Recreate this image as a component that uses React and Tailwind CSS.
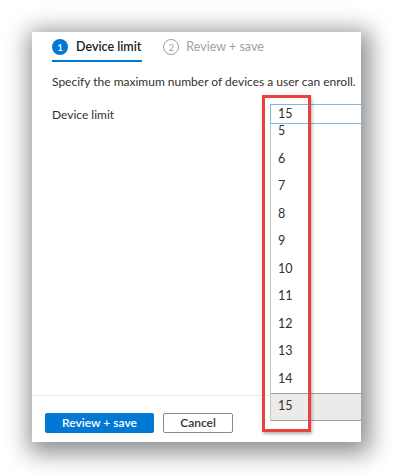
export default function App() {
  const items = [5, 6, 7, 8, 9, 10, 11, 12, 13, 14, 15];
  return (
    <div
      className="relative w-[393px] h-[474px] bg-white pl-[32px] pt-[32px] overflow-hidden text-[#323130]"
      style={{ fontFamily: 'Lato, "Open Sans", sans-serif' }}
    >
      <div className="relative w-[329px] h-[410px] bg-white overflow-hidden flex flex-col shadow-[3px_5px_22px_6px_rgba(0,0,0,0.45)]">
        <div className="flex items-end px-[20px] pt-[7px]">
          <div className="flex items-center gap-[8px] pb-[5px] border-b-2 border-[#0078d4]">
            <div className="w-[16px] h-[16px] rounded-full bg-[#0078d4] text-white text-[9px] font-bold flex items-center justify-center leading-none">
              1
            </div>
            <span className="text-[12.5px] font-semibold leading-[16px] text-[#201f1e] whitespace-nowrap pr-[1px]">Device limit</span>
          </div>
          <div className="flex items-center gap-[7px] pb-[7px] ml-[21px]">
            <div className="w-[16px] h-[16px] rounded-full border border-[#a19f9d] text-[#a19f9d] text-[9px] flex items-center justify-center leading-none">
              2
            </div>
            <span className="text-[12.5px] leading-[16px] text-[#a19f9d] whitespace-nowrap">Review + save</span>
          </div>
        </div>
        <p className="mt-[11px] px-[20px] text-[12px] leading-[17px] whitespace-nowrap">
          Specify the maximum number of devices a user can enroll.
        </p>
        <div className="mt-[14px] flex items-center pl-[20px]">
          <span className="w-[218px] shrink-0 text-[12px] leading-[17px]">Device limit</span>
          <div className="w-[200px] h-[20px] shrink-0 border border-[#7fb8e8] flex items-center pl-[7px] text-[12.5px]">
            15
          </div>
        </div>
        <div className="flex-1" />
        <div className="border-t border-[#edebe9] px-[13px] pt-[17px] pb-[9px] flex gap-[9px]">
          <button className="w-[109px] h-[20px] shrink-0 bg-[#0078d4] text-white text-[12px] font-semibold rounded-[2px] flex items-center justify-center whitespace-nowrap">
            Review + save
          </button>
          <button className="w-[70px] h-[20px] shrink-0 bg-white border border-[#8a8886] text-[12px] font-semibold rounded-[2px] flex items-center justify-center">
            Cancel
          </button>
        </div>
        <div className="absolute left-[238px] top-[92px] w-[200px] h-[297px] bg-white border-l border-[#c8c6c4] overflow-hidden">
          <div className="mt-[-6px] flex flex-col">
            {items.map((n) =>
              n === 15 ? (
                <div key={n} className="h-[27.5px] shrink-0 flex items-center pl-[7px] text-[12.5px] bg-[#edebe9] border border-[#a19f9d] ml-[-1px]">
                  {n}
                </div>
              ) : (
                <div key={n} className="h-[27.5px] shrink-0 flex items-center pl-[7px] text-[12.5px]">
                  {n}
                </div>
              )
            )}
          </div>
        </div>
      </div>
      <div className="absolute left-[262px] top-[95px] w-[49px] h-[337px] border-[3px] border-[#e8413e] shadow-[1px_2px_3px_rgba(0,0,0,0.3)]" />
    </div>
  );
}
